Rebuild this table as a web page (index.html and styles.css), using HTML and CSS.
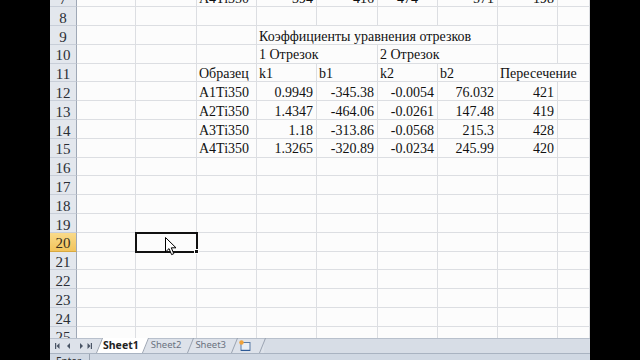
FILE: index.html
```html
<!DOCTYPE html>
<html>
<head>
<meta charset="utf-8">
<link rel="stylesheet" href="styles.css">
</head>
<body>
<div class="excel">
  <div class="sheet">
    <div class="grid">
      <div class="rh">7</div><div class="c"></div><div class="c"></div><div class="c">A4Ti350</div><div class="c n">394</div><div class="c n">416</div><div class="c n f7">474</div><div class="c n">571</div><div class="c n">198</div><div class="c"></div>
      <div class="rh">8</div><div class="c"></div><div class="c"></div><div class="c"></div><div class="c"></div><div class="c"></div><div class="c"></div><div class="c"></div><div class="c"></div><div class="c"></div>
      <div class="rh">9</div><div class="c"></div><div class="c"></div><div class="c"></div><div class="c s4">Коэффициенты уравнения отрезков</div><div class="c"></div><div class="c"></div>
      <div class="rh">10</div><div class="c"></div><div class="c"></div><div class="c"></div><div class="c s2">1 Отрезок</div><div class="c s2">2 Отрезок</div><div class="c"></div><div class="c"></div>
      <div class="rh">11</div><div class="c"></div><div class="c"></div><div class="c">Образец</div><div class="c">k1</div><div class="c">b1</div><div class="c">k2</div><div class="c">b2</div><div class="c s2">Пересечение</div>
      <div class="rh">12</div><div class="c"></div><div class="c"></div><div class="c">A1Ti350</div><div class="c n">0.9949</div><div class="c n">-345.38</div><div class="c n">-0.0054</div><div class="c n">76.032</div><div class="c n">421</div><div class="c"></div>
      <div class="rh">13</div><div class="c"></div><div class="c"></div><div class="c">A2Ti350</div><div class="c n">1.4347</div><div class="c n">-464.06</div><div class="c n">-0.0261</div><div class="c n">147.48</div><div class="c n">419</div><div class="c"></div>
      <div class="rh">14</div><div class="c"></div><div class="c"></div><div class="c">A3Ti350</div><div class="c n">1.18</div><div class="c n">-313.86</div><div class="c n">-0.0568</div><div class="c n">215.3</div><div class="c n">428</div><div class="c"></div>
      <div class="rh">15</div><div class="c"></div><div class="c"></div><div class="c">A4Ti350</div><div class="c n">1.3265</div><div class="c n">-320.89</div><div class="c n">-0.0234</div><div class="c n">245.99</div><div class="c n">420</div><div class="c"></div>
      <div class="rh">16</div><div class="c"></div><div class="c"></div><div class="c"></div><div class="c"></div><div class="c"></div><div class="c"></div><div class="c"></div><div class="c"></div><div class="c"></div>
      <div class="rh">17</div><div class="c"></div><div class="c"></div><div class="c"></div><div class="c"></div><div class="c"></div><div class="c"></div><div class="c"></div><div class="c"></div><div class="c"></div>
      <div class="rh">18</div><div class="c"></div><div class="c"></div><div class="c"></div><div class="c"></div><div class="c"></div><div class="c"></div><div class="c"></div><div class="c"></div><div class="c"></div>
      <div class="rh">19</div><div class="c"></div><div class="c"></div><div class="c"></div><div class="c"></div><div class="c"></div><div class="c"></div><div class="c"></div><div class="c"></div><div class="c"></div>
      <div class="rh rh-sel">20</div><div class="c"></div><div class="c active"><span class="handle"></span>
        <svg class="cursor" width="12" height="19" viewBox="0 0 12 19"><path d="M0.5 0.5 L0.5 15 L4 11.6 L6.6 17.6 L8.8 16.7 L6.3 10.8 L11 10.8 Z" fill="#fff" stroke="#000" stroke-width="1" stroke-linejoin="round"/></svg>
      </div><div class="c"></div><div class="c"></div><div class="c"></div><div class="c"></div><div class="c"></div><div class="c"></div><div class="c"></div>
      <div class="rh">21</div><div class="c"></div><div class="c"></div><div class="c"></div><div class="c"></div><div class="c"></div><div class="c"></div><div class="c"></div><div class="c"></div><div class="c"></div>
      <div class="rh">22</div><div class="c"></div><div class="c"></div><div class="c"></div><div class="c"></div><div class="c"></div><div class="c"></div><div class="c"></div><div class="c"></div><div class="c"></div>
      <div class="rh">23</div><div class="c"></div><div class="c"></div><div class="c"></div><div class="c"></div><div class="c"></div><div class="c"></div><div class="c"></div><div class="c"></div><div class="c"></div>
      <div class="rh">24</div><div class="c"></div><div class="c"></div><div class="c"></div><div class="c"></div><div class="c"></div><div class="c"></div><div class="c"></div><div class="c"></div><div class="c"></div>
      <div class="rh">25</div><div class="c"></div><div class="c"></div><div class="c"></div><div class="c"></div><div class="c"></div><div class="c"></div><div class="c"></div><div class="c"></div><div class="c"></div>
    </div>
  </div>
  <div class="tabbar">
    <div class="nav">
      <svg width="44" height="10" viewBox="0 0 44 10">
        <g fill="#4a5566">
          <rect x="5" y="2" width="1.2" height="6"/><path d="M6.5 5 L9.5 2 L9.5 8 Z"/>
          <path d="M17 5 L20 2 L20 8 Z"/>
          <path d="M30 2 L33 5 L30 8 Z"/>
          <path d="M37.5 2 L40.5 5 L37.5 8 Z"/><rect x="40.8" y="2" width="1.2" height="6"/>
        </g>
      </svg>
    </div>
    <div class="tabs">
      <div class="tab on">Sheet1</div>
      <div class="tab">Sheet2</div>
      <div class="tab">Sheet3</div>
      <div class="tab add">
        <svg width="14" height="11" viewBox="0 0 14 11">
          <rect x="3" y="2.5" width="9" height="8" fill="#e8eef6" stroke="#5a7ba6" stroke-width="1"/>
          <path d="M3 10.5 L12 10.5" stroke="#2d5a96" stroke-width="1.4"/>
          <circle cx="3.5" cy="2.5" r="2.2" fill="#f0a23a"/>
        </svg>
      </div>
    </div>
    <div class="scroll"></div>
  </div>
  <div class="status"><span class="mode">Enter</span></div>
</div>
</body>
</html>
```

FILE: styles.css
```css
html, body {
  margin: 0;
  padding: 0;
  background: #000;
  overflow: hidden;
  width: 640px;
  height: 360px;
}

.excel {
  margin-left: 50px;
  width: 540px;
  height: 360px;
  background: #fcfcfc;
  display: flex;
  flex-direction: column;
  overflow: hidden;
  font-family: "Liberation Serif", "DejaVu Serif", "Times New Roman", serif;
}

.sheet {
  height: 338px;
  flex: none;
  overflow: hidden;
}

.grid {
  margin-top: -11.5px;
  display: grid;
  grid-template-columns: 27px 59px 61px 60px 60px 61px 60px 60px 60px 32px;
  grid-auto-rows: 18.8px;
  font-size: 14px;
  color: #111;
}

.rh {
  background: #e3e7ed;
  border-right: 1px solid #9fa8b6;
  border-bottom: 1px solid #c8ced8;
  color: #2a2e35;
  font-size: 15px;
  text-align: center;
  line-height: 16px;
  padding-top: 2.5px;
  box-sizing: border-box;
}

.rh-sel {
  background: linear-gradient(#f9da8a, #f2c45c);
  color: #3a3020;
  border-bottom-color: #d9a93f;
}

.c {
  border-right: 1px solid #dcdee2;
  border-bottom: 1px solid #dcdee2;
  box-sizing: border-box;
  line-height: 16px;
  padding: 2.5px 2px 0 2px;
  white-space: nowrap;
  position: relative;
}

.n {
  text-align: right;
  padding-right: 3px;
}

.f7 {
  padding-right: 19px;
}

.s2 {
  grid-column: span 2;
}

.s4 {
  grid-column: span 4;
}

.active {
  outline: 2px solid #111;
  outline-offset: -1px;
  z-index: 2;
}

.handle {
  position: absolute;
  right: -3px;
  bottom: -3px;
  width: 5px;
  height: 5px;
  background: #111;
  border: 1px solid #fff;
  box-sizing: border-box;
}

.cursor {
  position: absolute;
  left: 29px;
  top: 4px;
}

.tabbar {
  height: 15px;
  flex: none;
  display: flex;
  align-items: stretch;
  background: #dde2ea;
  border-top: 1px solid #b8c0cc;
  box-sizing: border-box;
  font-family: "Noto Sans", "DejaVu Sans", sans-serif;
  font-size: 9.5px;
}

.nav {
  width: 47px;
  display: flex;
  align-items: center;
}

.nav svg {
  display: block;
}

.tabs {
  display: flex;
  align-items: stretch;
  margin-top: -1px;
}

.tab {
  position: relative;
  isolation: isolate;
  padding: 0 6px 0 8px;
  line-height: 14px;
  color: #6a7280;
}

.tab::before {
  content: "";
  position: absolute;
  inset: 0;
  z-index: -1;
  border-right: 1px solid #9aa3b1;
  transform: skewX(-22deg);
  transform-origin: bottom left;
}

.tab.on {
  color: #222;
  font-weight: bold;
  font-size: 10.5px;
  padding: 0 4px 0 6px;
}

.tab.on::before {
  background: #fff;
  border-left: 1px solid #9aa3b1;
  left: -1px;
}

.tab.add {
  padding: 0 8px 0 6px;
  display: flex;
  align-items: center;
}

.scroll {
  flex: 1;
  background: #d7dde6;
  margin-left: 4px;
}

.status {
  flex: 1;
  background: #d0d8e3;
  border-top: 1px solid #a9b3c1;
  font-family: "Noto Sans", "DejaVu Sans", sans-serif;
  font-size: 10px;
  color: #333;
}

.mode {
  display: inline-block;
  padding: 0 8px 0 6px;
  border-right: 1px solid #9aa4b2;
  line-height: 14px;
  margin-top: -1px;
}
```
